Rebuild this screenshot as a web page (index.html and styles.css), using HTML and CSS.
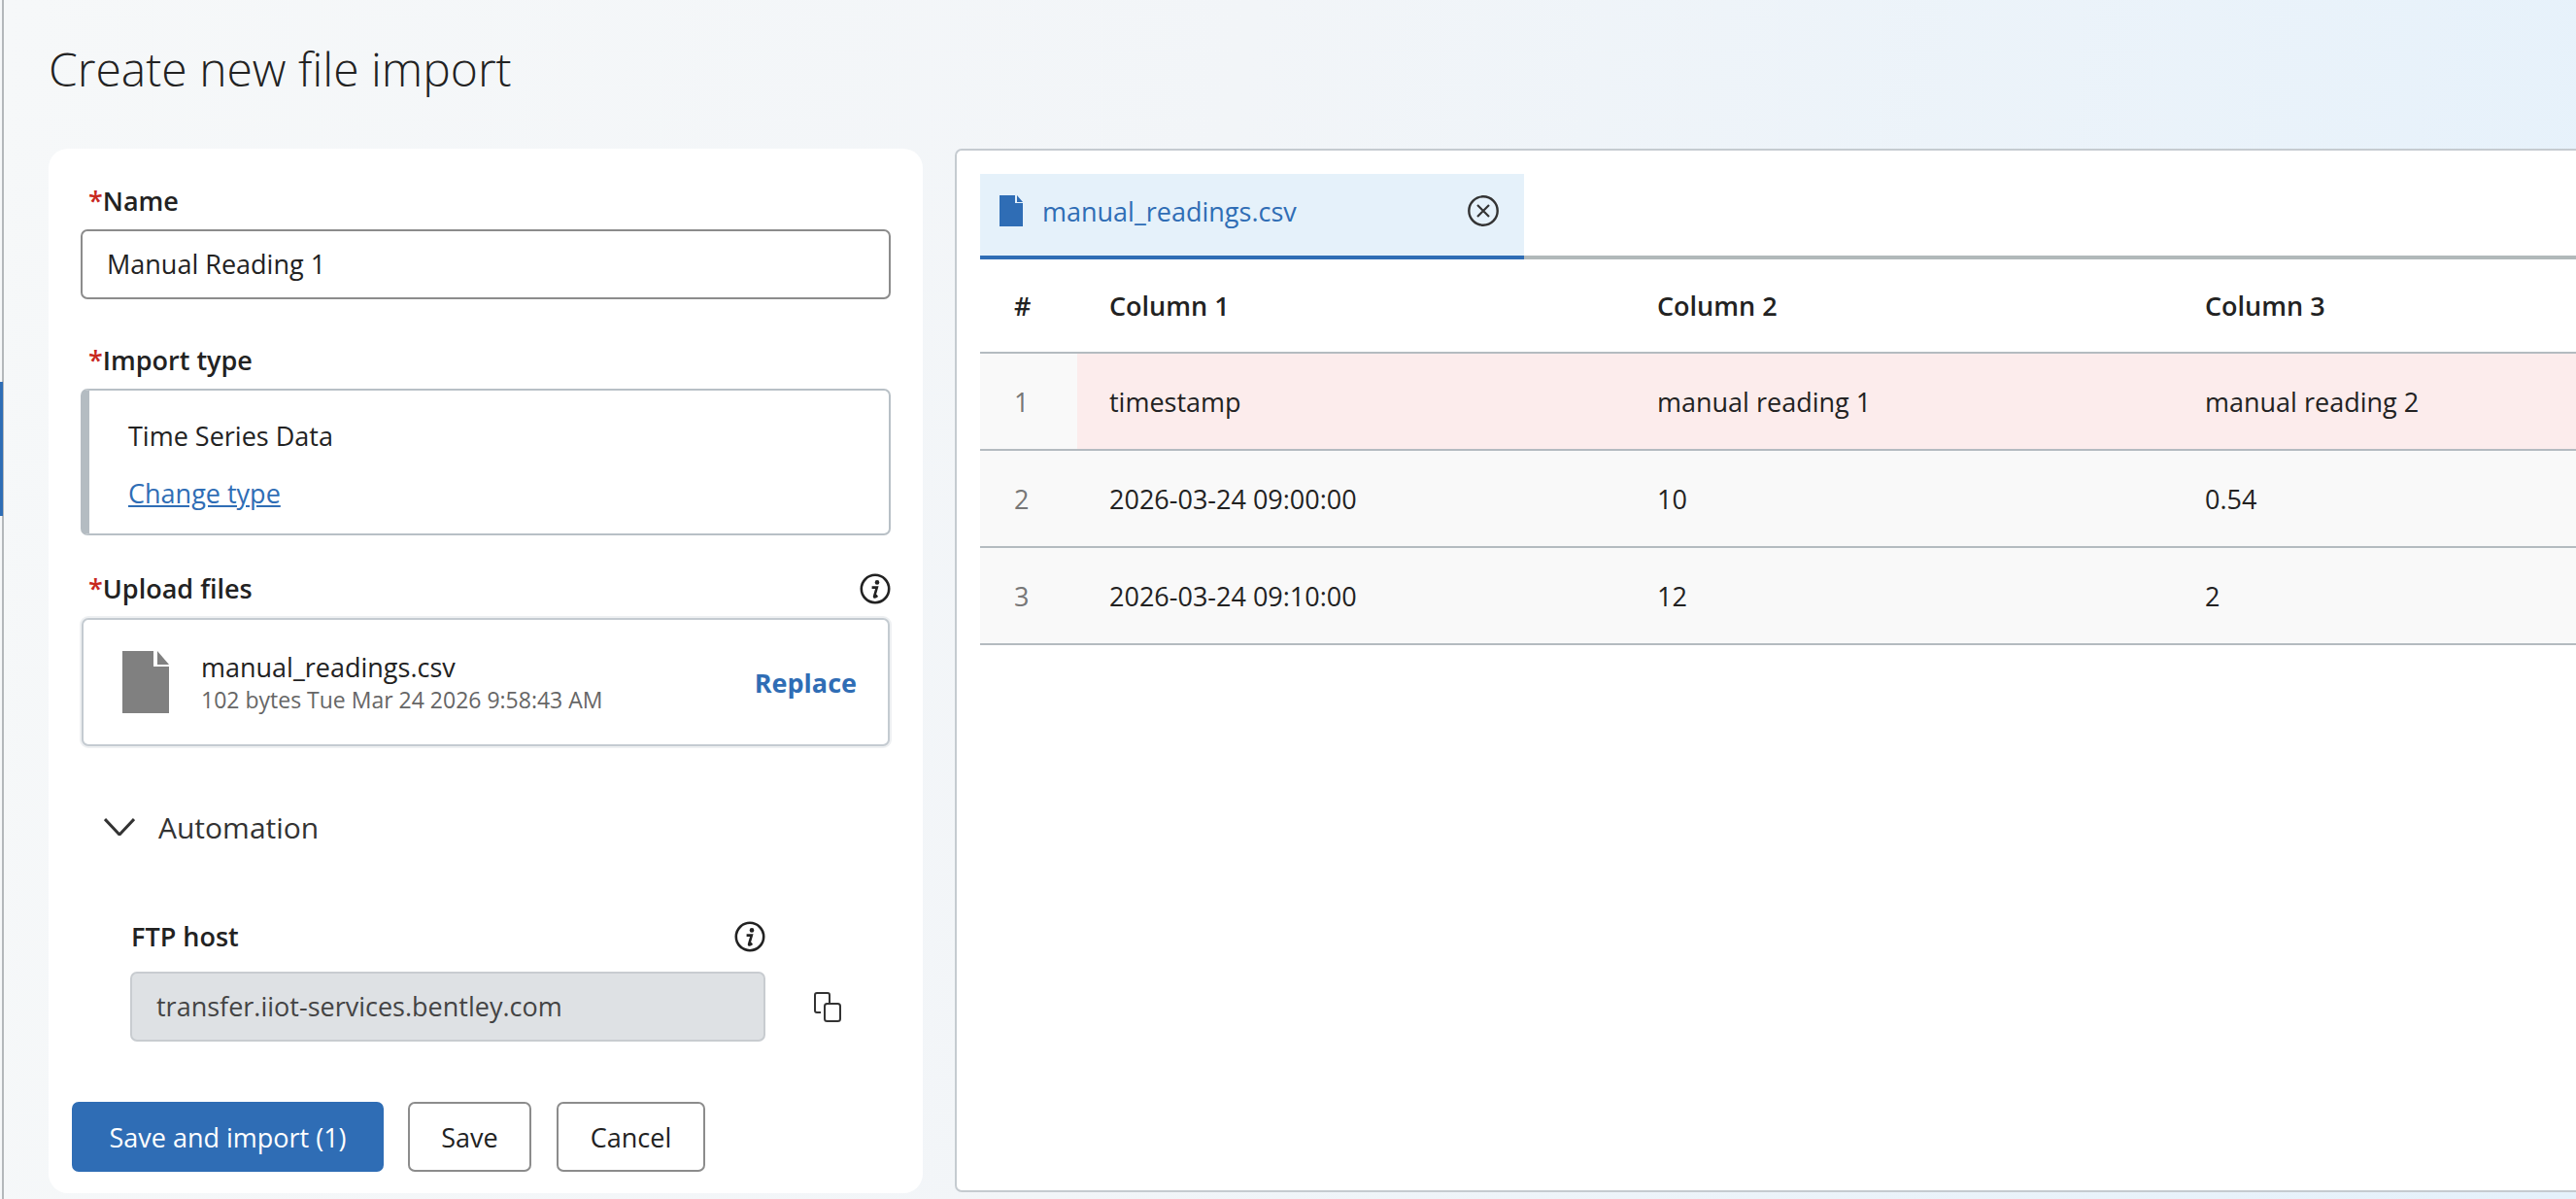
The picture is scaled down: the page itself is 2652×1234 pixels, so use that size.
FILE: index.html
```html
<!DOCTYPE html>
<html lang="en">
<head>
    <meta charset="UTF-8">
    <meta name="viewport" content="width=device-width, initial-scale=1.0">
    <title>Create new file import</title>
    <link rel="stylesheet" href="styles.css">
</head>
<body>
    <div class="app">
        <div class="rail"><div class="rail-marker"></div></div>
        <main class="page">
            <h1 class="page-title">Create new file import</h1>
            <div class="columns">
                <section class="form-card">
                    <div class="fields">
                        <label class="label"><span class="req">*</span>Name</label>
                        <div class="input">Manual Reading 1</div>

                        <label class="label label-type"><span class="req">*</span>Import type</label>
                        <div class="type-box">
                            <div class="type-name">Time Series Data</div>
                            <a href="#" class="type-link">Change type</a>
                        </div>

                        <div class="label label-row label-upload">
                            <span><span class="req">*</span>Upload files</span>
                            <svg class="info-icon" viewBox="0 0 32 32"><circle cx="16" cy="16" r="14.2" fill="none" stroke="#222" stroke-width="2.6"/><circle cx="18" cy="9.4" r="2.3" fill="#222"/><path d="M12.6 14.6h5.2l-2.7 9.2c-.2.9.7 1 3.2-.9" fill="none" stroke="#222" stroke-width="2.6"/></svg>
                        </div>
                        <div class="upload-box">
                            <svg class="file-icon" viewBox="0 0 48 64"><path d="M0 0h32v16h16v48H0z" fill="#808080"/><path d="M36 0l12 14H36z" fill="#808080"/></svg>
                            <div class="upload-info">
                                <div class="upload-name">manual_readings.csv</div>
                                <div class="upload-meta">102 bytes Tue Mar 24 2026 9:58:43 AM</div>
                            </div>
                            <a href="#" class="replace">Replace</a>
                        </div>

                        <div class="automation">
                            <svg class="chevron" viewBox="0 0 32 18"><path d="M1 1l15 16L31 1" fill="none" stroke="#333" stroke-width="3"/></svg>
                            <span>Automation</span>
                        </div>

                        <div class="ftp">
                            <div class="label label-row ftp-label">
                                <span>FTP host</span>
                                <svg class="info-icon" viewBox="0 0 32 32"><circle cx="16" cy="16" r="14.2" fill="none" stroke="#222" stroke-width="2.6"/><circle cx="18" cy="9.4" r="2.3" fill="#222"/><path d="M12.6 14.6h5.2l-2.7 9.2c-.2.9.7 1 3.2-.9" fill="none" stroke="#222" stroke-width="2.6"/></svg>
                            </div>
                            <div class="ftp-row">
                                <div class="input input-disabled">transfer.iiot-services.bentley.com</div>
                                <svg class="copy-icon" viewBox="0 0 28 31"><path d="M7 21H3a2 2 0 0 1-2-2V3a2 2 0 0 1 2-2h11a2 2 0 0 1 2 2v8" fill="none" stroke="#333" stroke-width="2"/><rect x="11" y="12" width="16" height="18" rx="2.5" fill="none" stroke="#333" stroke-width="2"/></svg>
                            </div>
                        </div>
                    </div>
                    <div class="actions">
                        <button class="btn btn-primary">Save and import (1)</button>
                        <button class="btn btn-save">Save</button>
                        <button class="btn btn-cancel">Cancel</button>
                    </div>
                </section>

                <section class="preview">
                    <div class="tabs">
                        <div class="tab">
                            <svg class="tab-file" viewBox="0 0 24 32"><path d="M0 0h16v8h8v24H0z" fill="#2f6db5"/><path d="M18 0l6 7h-6z" fill="#2f6db5"/></svg>
                            <span class="tab-name">manual_readings.csv</span>
                            <svg class="tab-close" viewBox="0 0 32 32"><circle cx="16" cy="16" r="14.7" fill="none" stroke="#333" stroke-width="2.4"/><path d="M10 10l12 12M22 10L10 22" stroke="#333" stroke-width="2.2"/></svg>
                        </div>
                    </div>
                    <div class="table">
                        <div class="row row-head">
                            <div class="cell cell-num">#</div>
                            <div class="cell">Column 1</div>
                            <div class="cell">Column 2</div>
                            <div class="cell">Column 3</div>
                        </div>
                        <div class="row row-error">
                            <div class="cell cell-num">1</div>
                            <div class="cell">timestamp</div>
                            <div class="cell">manual reading 1</div>
                            <div class="cell">manual reading 2</div>
                        </div>
                        <div class="row">
                            <div class="cell cell-num">2</div>
                            <div class="cell">2026-03-24 09:00:00</div>
                            <div class="cell">10</div>
                            <div class="cell">0.54</div>
                        </div>
                        <div class="row">
                            <div class="cell cell-num">3</div>
                            <div class="cell">2026-03-24 09:10:00</div>
                            <div class="cell">12</div>
                            <div class="cell">2</div>
                        </div>
                    </div>
                </section>
            </div>
        </main>
    </div>
</body>
</html>
```

FILE: styles.css
```css
html, body {
    margin: 0;
    padding: 0;
    height: 100%;
    overflow: hidden;
}
body {
    font-family: "Open Sans", sans-serif;
    font-size: 27px;
    color: #222;
}
.app {
    display: flex;
    width: 2652px;
    height: 1234px;
    overflow: hidden;
    background: linear-gradient(100deg, #f6f8f9 0%, #f2f5f8 45%, #e5f1fb 100%);
}
.rail {
    width: 2px;
    flex: none;
    background-color: #f6f8f9;
    border-right: 2px solid #b4b8bb;
}
.rail-marker {
    width: 3px;
    height: 138px;
    margin-top: 393px;
    background-color: #2f6db5;
}
.page {
    flex: 1;
    min-width: 0;
    padding-left: 46px;
}
.page-title {
    margin: 0;
    height: 153px;
    padding-top: 41px;
    box-sizing: border-box;
    font-size: 48px;
    line-height: 60px;
    font-weight: 300;
    color: #222;
}
.columns {
    display: flex;
    align-items: flex-start;
    gap: 33px;
}

/* left form */
.form-card {
    width: 900px;
    height: 1075px;
    flex: none;
    box-sizing: border-box;
    padding-top: 35px;
    background-color: white;
    border-radius: 20px;
}
.fields {
    padding: 0 33px;
}
.label {
    display: block;
    height: 38px;
    line-height: 38px;
    margin-bottom: 10px;
    padding-left: 8px;
    font-weight: 600;
}
.req {
    color: #c8281e;
}
.label-row {
    display: flex;
    justify-content: space-between;
    align-items: center;
}
.label-type {
    margin-top: 44px;
}
.label-upload {
    margin-top: 36px;
    margin-bottom: 11px;
}
.info-icon {
    width: 32px;
    height: 32px;
}
.input {
    height: 72px;
    box-sizing: border-box;
    padding-left: 25px;
    line-height: 68px;
    background-color: white;
    border: 2px solid #8c8c8c;
    border-radius: 7px;
}
.type-box {
    height: 151px;
    box-sizing: border-box;
    padding: 28px 0 0 40px;
    background-color: white;
    border: 2px solid #b8c0c6;
    border-left: 9px solid #b4bcc2;
    border-radius: 7px;
}
.type-name {
    line-height: 38px;
}
.type-link {
    display: inline-block;
    margin-top: 21px;
    line-height: 38px;
    color: #2f6db5;
    text-decoration: underline;
}
.upload-box {
    display: flex;
    align-items: center;
    height: 132px;
    box-sizing: border-box;
    margin: 0 1px;
    padding: 0 32px 0 40px;
    background-color: white;
    border: 2px solid #c4cbd1;
    border-radius: 7px;
    box-shadow: 0 0 0 2px #eef0f2;
}
.file-icon {
    width: 48px;
    height: 64px;
    flex: none;
}
.upload-info {
    flex: 1;
    margin-left: 33px;
}
.upload-name {
    line-height: 36px;
}
.upload-meta {
    font-size: 23px;
    line-height: 30px;
    color: #666;
}
.replace {
    font-weight: 700;
    color: #2f6db5;
    text-decoration: none;
}
.automation {
    display: flex;
    align-items: center;
    height: 50px;
    margin-top: 58px;
    padding-left: 24px;
    font-size: 30px;
    color: #333;
}
.chevron {
    width: 32px;
    height: 18px;
    margin-right: 24px;
}
.ftp {
    margin-top: 69px;
    padding-left: 51px;
}
.ftp-label {
    width: 654px;
    padding-left: 1px;
    box-sizing: border-box;
    margin-bottom: 17px;
}
.ftp-row {
    display: flex;
    align-items: center;
}
.input-disabled {
    width: 654px;
    background-color: #dee1e4;
    border-color: #c8ccd0;
    color: #444;
}
.copy-icon {
    width: 28px;
    height: 31px;
    margin-left: 50px;
}
.actions {
    display: flex;
    gap: 25px;
    margin-top: 62px;
    padding-left: 24px;
}
.btn {
    height: 72px;
    box-sizing: border-box;
    padding: 0;
    font-family: inherit;
    font-size: 27px;
    color: #222;
    background-color: white;
    border: 2px solid #8c8c8c;
    border-radius: 7px;
}
.btn-primary {
    width: 321px;
    color: white;
    background-color: #2f6db5;
    border-color: #2f6db5;
}
.btn-save {
    width: 127px;
}
.btn-cancel {
    width: 153px;
    margin-left: 1px;
}

/* right preview */
.preview {
    width: 1800px;
    height: 1074px;
    flex: none;
    box-sizing: border-box;
    padding: 24px 0 0 24px;
    background-color: white;
    border: 2px solid #c5cbd0;
    border-radius: 7px;
}
.tabs {
    height: 88px;
    box-sizing: border-box;
    border-bottom: 4px solid #b1b9ba;
}
.tab {
    display: flex;
    align-items: center;
    width: 560px;
    height: 88px;
    box-sizing: border-box;
    padding: 0 26px 8px 20px;
    background-color: #e5f1fa;
    border-bottom: 4px solid #2f6db5;
}
.tab-file {
    width: 24px;
    height: 32px;
    flex: none;
}
.tab-name {
    flex: 1;
    margin-left: 20px;
    color: #2f6db5;
}
.tab-close {
    width: 32px;
    height: 32px;
}
.table {
    display: block;
}
.row {
    display: grid;
    grid-template-columns: 100px 564px 564px 1fr;
    height: 100px;
    box-sizing: border-box;
    background-color: #f9f9f9;
    border-bottom: 2px solid #b4bbc0;
}
.row-head {
    height: 97px;
    background-color: white;
    font-weight: 600;
}
.row-error .cell {
    background-color: #fcecec;
}
.row-error .cell-num {
    background-color: #f9f9f9;
}
.cell {
    display: flex;
    align-items: center;
    padding-left: 33px;
    min-width: 0;
}
.cell-num {
    padding-left: 35px;
    color: #777;
}
.row-head .cell-num {
    color: #222;
}
```
